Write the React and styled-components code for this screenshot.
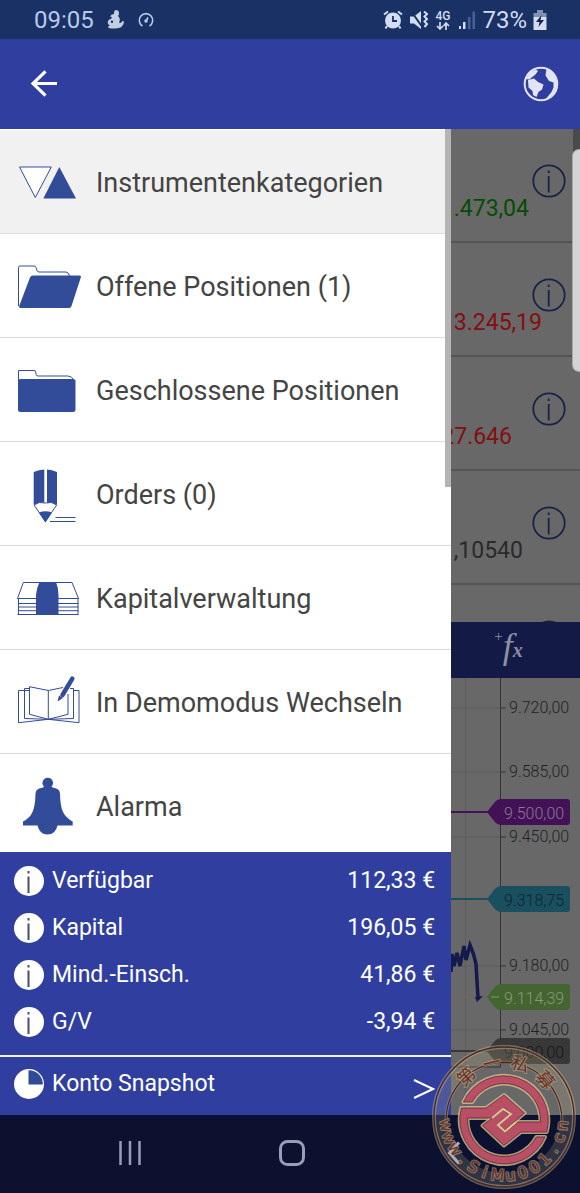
import React from "react";
import styled, { createGlobalStyle } from "styled-components";

const GlobalStyle = createGlobalStyle`
  *, *::before, *::after { box-sizing: border-box; }
  body { margin: 0; background: #0c1130; }
  button { border: 0; padding: 0; background: none; font: inherit; color: inherit; cursor: pointer; }
  ul, dl, dd { margin: 0; padding: 0; list-style: none; }
  svg { display: block; flex: none; }
`;

const INK = "#324c9a";
const BRAND = "#303f9f";

const Shell = styled.div`
  position: relative;
  display: flex;
  flex-direction: column;
  height: 100vh;
  overflow: hidden;
  font-family: Roboto, "Liberation Sans", sans-serif;
`;

const StatusBar = styled.div`
  flex: none;
  display: flex;
  align-items: center;
  justify-content: space-between;
  height: 39px;
  padding: 0 33px 0 34px;
  background: #193165;
  color: #b9c9ea;
  font-size: 24px;
  line-height: 28px;
`;

const StatusGroup = styled.div`
  display: flex;
  align-items: center;
  gap: ${(p) => p.$gap}px;
  color: ${(p) => p.$tone};
`;

const Network = styled.span`
  display: flex;
  flex-direction: column;
  align-items: center;
  font-size: 12px;
  font-weight: 500;
  line-height: 12px;
`;

const AppBar = styled.header`
  flex: none;
  display: flex;
  align-items: center;
  justify-content: space-between;
  height: 90px;
  padding: 0 19px 0 24px;
  background: ${BRAND};
  color: #fff;
`;

const IconButton = styled.button`
  display: grid;
  place-items: center;
  width: 40px;
  height: 40px;
`;

const Body = styled.div`
  flex: 1;
  min-height: 0;
  display: grid;
  grid-template-columns: minmax(0, 7fr) minmax(0, 2fr);
`;

const Drawer = styled.aside`
  position: relative;
  display: flex;
  flex-direction: column;
  min-height: 0;
  background: #fff;
`;

const ScrollThumb = styled.span`
  position: absolute;
  top: 0;
  right: 0;
  width: 6px;
  height: 358px;
  background: #b4b4b4;
`;

const Menu = styled.ul`
  flex: 1;
  min-height: 0;
  padding-top: 1px;
  overflow: hidden;
`;

const MenuItem = styled.li`
  border-bottom: 1px solid #dcdcdc;
  background: ${(p) => (p.$active ? "#f1f1f1" : "#fff")};
`;

const MenuButton = styled.button`
  display: flex;
  align-items: center;
  gap: 14px;
  width: 100%;
  height: 103px;
  padding: 0 17px;
  color: #444;
  font-size: 27px;
  line-height: 32px;
  text-align: left;
  white-space: nowrap;
`;

const MenuLabel = styled.span`
  padding-top: 3px;
`;

const Summary = styled.section`
  flex: none;
  background: ${BRAND};
  color: #fff;
  font-size: 23px;
  line-height: 28px;
`;

const Balances = styled.dl`
  padding: 5px 16px 10px 14px;
  border-bottom: 2px solid #f2f2fa;
`;

const BalanceRow = styled.div`
  display: flex;
  align-items: center;
  justify-content: space-between;
  height: 47px;
`;

const Label = styled.span`
  display: flex;
  align-items: center;
  gap: 8px;
`;

const Snapshot = styled.button`
  display: flex;
  align-items: center;
  justify-content: space-between;
  width: 100%;
  height: 58px;
  padding: 0 16px 5px 14px;
`;

const Backdrop = styled.main`
  display: flex;
  flex-direction: column;
  min-width: 0;
  min-height: 0;
  background: #686868;
`;

const Quotes = styled.ul`
  flex: 1;
  min-height: 0;
  overflow: hidden;
`;

const Quote = styled.li`
  display: flex;
  flex-direction: column;
  align-items: flex-end;
  height: 114px;
  padding-top: 35px;
  border-bottom: 2px solid #545454;
`;

const InfoSlot = styled.button`
  margin-right: 14px;
  line-height: 0;
`;

const Price = styled.span`
  padding-right: ${(p) => p.$end}px;
  color: ${(p) => p.$tone};
  font-size: 23px;
  line-height: 22px;
`;

const Toolbar = styled.div`
  flex: none;
  display: grid;
  place-items: center;
  height: 56px;
  padding-right: 14px;
  background: #131a46;
`;

const FxButton = styled.button`
  display: flex;
  align-items: flex-start;
  color: #8d8fa3;
  font-family: "Liberation Serif", serif;
`;

const FxPart = styled.span`
  font-size: ${(p) => p.$size}px;
  font-style: ${(p) => (p.$italic ? "italic" : "normal")};
  font-weight: ${(p) => (p.$bold ? 700 : 400)};
  line-height: ${(p) => p.$line}px;
`;

const ChartPane = styled.div`
  flex: none;
  display: flex;
  justify-content: flex-end;
  overflow: hidden;
`;

const AxisText = styled.text`
  font-size: 16px;
  font-weight: 300;
  fill: ${(p) => p.$fill};
`;

const NavBar = styled.nav`
  flex: none;
  display: grid;
  grid-template-columns: repeat(3, 1fr);
  place-items: center;
  height: 78px;
  padding: 0 45px 3px 49px;
  background: #0c1130;
`;

const EdgeShade = styled.span`
  position: absolute;
  top: 129px;
  right: 0;
  width: 7px;
  height: 30px;
  background: #4a4a4a;
`;

const EdgeHandle = styled.span`
  position: absolute;
  top: 149px;
  right: 0;
  width: 8px;
  height: 223px;
  border: 1px solid #a9a9a9;
  border-right: 0;
  border-radius: 7px 0 0 7px;
  background: #d4d4d4;
`;

const Stamp = styled.div`
  position: absolute;
  right: 3px;
  bottom: 3px;
`;

const StampText = styled.text`
  font-family: ${(p) => (p.$han ? '"Noto Sans CJK SC", sans-serif' : '"DejaVu Sans", sans-serif')};
  font-size: ${(p) => (p.$han ? 18 : 16)}px;
  fill: #6b302a;
  stroke: #b9a981;
  stroke-opacity: 0.6;
  stroke-width: 2px;
  paint-order: stroke;
  text-anchor: middle;
`;

const icons = {
  categories: (
    <>
      <path d="M2.5 15H34.3L18.3 45.5Z" fill="#fff" stroke={INK} />
      <path d="M42.3 15L59 46.5H26.3Z" fill={INK} />
    </>
  ),
  open: (
    <>
      <path d="M1.5 50V11.5q0-1.5 1.5-1.5H17q1.5 0 2 1.5l1 3q.5 1.5 2 1.5H49q2.500 0 3.500 4" fill="none" stroke={INK} />
      <path d="M16 19.500H62.500q2 0 1.300 2L54.500 50q-.6 2-2.500 2H3.500q-2 0-1.300-2L13 21.500q.8-2 3-2Z" fill={INK} />
    </>
  ),
  closed: (
    <>
      <path d="M1.500 24V10.500H17q1.500 0 1.700 1.500l.4 2.500q.3 1.500 1.900 1.500H51q4 0 6.500 5" fill="none" stroke={INK} />
      <rect x="1" y="19" width="57.500" height="33" rx="2.500" fill={INK} />
    </>
  ),
  orders: (
    <>
      <path d="M16.700 8Q22 5.500 27.300 5.500V42L16.700 40.500ZM30 5.500Q35 5.500 40 8V40.500L30 42Z" fill={INK} />
      <path d="M17 41L28.300 57.500L39.700 41Q35 37 28.300 39Q22 37 17 41Z" fill="#fff" stroke={INK} />
      <path d="M22 48.500Q28.500 46 35 48.500L28.400 58.500Z" fill={INK} />
      <path d="M38.500 53.500H58.500M33 57.500H58.500" stroke={INK} />
    </>
  ),
  capital: (
    <>
      <path d="M6.300 14.500H55L61.500 30.500H.5ZM1.500 30.500V46.500H61V30.500M1 35.500H61.500M1 39H61.500M1 42.700H61.500M.5 46.500H61.500" fill="none" stroke={INK} />
      <path d="M22.500 14H39Q41.500 20 41.500 27V47H19V27Q19.500 20 22.500 14Z" fill={INK} />
    </>
  ),
  demo: (
    <>
      <path d="M12.500 18.500H1.500V50.700L31.300 47.300L62 50.700V18.500H56.500M12.500 16.500H7.500V46.500L31.300 47.300L56.500 46.500V16.500H53M31.300 18.500L12.500 14.700V42.300L31.300 47.300L51 42.300V22M31.300 47.300V18.500L46 15.500" fill="none" stroke={INK} />
      <path d="M55.300 6.700L45.500 23" stroke={INK} strokeWidth="4.500" strokeLinecap="round" />
      <path d="M42 23.500L46 26L40.500 29.500Z" fill={INK} />
    </>
  ),
  alarm: (
    <path d="M30.500 1.700a5.300 5.300 0 0 1 4 9q.5 1 3 1.200Q43 13 43 18q.3 12 3 18 3 6 9.700 9.500V49.500H40.500q-2 9-10 9t-10-9H6V45.500Q13 42 15.500 36q2.700-6 3-18 0-5 5.500-6.100 2.500-.2 3-1.200a5.300 5.300 0 0 1 3.500-9Z" fill={INK} />
  ),
};

const menu = [
  { icon: "categories", label: "Instrumentenkategorien", active: true },
  { icon: "open", label: "Offene Positionen (1)" },
  { icon: "closed", label: "Geschlossene Positionen" },
  { icon: "orders", label: "Orders (0)" },
  { icon: "capital", label: "Kapitalverwaltung" },
  { icon: "demo", label: "In Demomodus Wechseln" },
  { icon: "alarm", label: "Alarma" },
];

const balances = [
  ["Verfügbar", "112,33 €"],
  ["Kapital", "196,05 €"],
  ["Mind.-Einsch.", "41,86 €"],
  ["G/V", "-3,94 €"],
];

const quotes = [
  { price: ".473,04", end: 51, tone: "#054c05" },
  { price: "3.245,19", end: 38, tone: "#820f12" },
  { price: "27.646", end: 68, tone: "#820f12" },
  { price: ",10540", end: 57, tone: "#2a2a2a" },
  { price: "", end: 57, tone: "#2a2a2a" },
];

const ticks = [
  [30, "9.720,00"],
  [94, "9.585,00"],
  [159, "9.450,00"],
  [288, "9.180,00"],
  [352, "9.045,00"],
];

const tags = [
  { y: 134, value: "9.500,00", fill: "#431256", ink: "#8d7795", line: 37 },
  { y: 221, value: "9.318,75", fill: "#1a4f60", ink: "#0f252d", line: 37 },
  { y: 319, value: "9.114,39", fill: "#44652f", ink: "#87997b", line: 0 },
  { y: 373, value: "9.000,00", fill: "#383838", ink: "#161616", line: 40 },
];

function InfoBadge() {
  return (
    <svg width="30" height="30" viewBox="0 0 30 30" aria-hidden="true">
      <circle cx="15" cy="15" r="15" fill="#fff" />
      <path d="M14.500 5V7.500M14.500 10.500V27" stroke="#4a4a72" strokeWidth="2" />
    </svg>
  );
}

function InfoRing() {
  return (
    <svg width="34" height="34" viewBox="0 0 34 34" aria-hidden="true">
      <circle cx="17" cy="17" r="15.700" fill="none" stroke="#182247" strokeWidth="1.800" />
      <path d="M16.700 6.500V9M16.700 12V28.500" stroke="#182247" strokeWidth="1.800" />
    </svg>
  );
}

function Chart() {
  return (
    <svg width="129" height="437" viewBox="0 0 129 437" role="img" aria-label="Kursverlauf">
      <g stroke="#5c5c5c">
        <path d="M14.500 0V437" />
        {ticks.map(([y]) => (
          <path key={y} d={`M0 ${y}H50`} />
        ))}
      </g>
      <path d="M49.500 0V389M0 389H50" stroke="#333" fill="none" />
      {ticks.map(([y, value]) => (
        <g key={value}>
          <path d={`M49 ${y}H55`} stroke="#333" />
          <AxisText x="58" y={y + 5} $fill="#222">{value}</AxisText>
        </g>
      ))}
      <path d="M0 319H37" stroke="#706560" />
      {tags.map((t) => (
        <g key={t.value}>
          {t.line > 0 && <path d={`M0 ${t.y}H${t.line}`} stroke={t.fill} strokeWidth="2" />}
          <path
            d={`M36 ${t.y}L43 ${t.y - 9}Q46 ${t.y - 13} 51 ${t.y - 13}H116q3 0 3 3V${t.y + 10}q0 3-3 3H51Q46 ${t.y + 13} 43 ${t.y + 9}Z`}
            fill={t.fill}
          />
          <AxisText x="53" y={t.y + 7} $fill={t.ink}>{t.value}</AxisText>
        </g>
      ))}
      <path d="M40 319H48" stroke="#7f9472" />
      <path
        d="M0 294L1 276L3 288L6 275L9 288L13 268L15 282L19 267Q23 276 25 286L27 320"
        fill="none"
        stroke="#141a4c"
        strokeWidth="3.500"
      />
      <path d="M24 319L32 318L26 324Z" fill="#141a4c" />
    </svg>
  );
}

const UPPER_HOOK =
  "M-40.600 -15A44.400 44.400 0 0 1 42.700 15H17L0 28.500L-21.500 8.500L-1 -7L5 -2.500L-7 8L1 15.500L14 5H36.450A36.500 36.500 0 0 0 -31.750 -15Z";
const LOWER_HOOK =
  "M-42.700 -9H-18L0 -22L20.500 -4L1 13L-5 8L7.500 -3L0 -9.500L-13 1H-36.450A36.500 36.500 0 0 0 32.300 20H41A44.400 44.400 0 0 1 -42.700 -9Z";

function StampArt() {
  const han = [["第", -43], ["一", -13], ["私", 17], ["募", 48]];
  const latin = [..."www.SiMu001.cn"];
  return (
    <svg width="146" height="146" viewBox="-73 -73 146 146" role="img" aria-label="第一私募">
      <circle r="63" fill="none" stroke="#b9ad86" strokeOpacity=".22" strokeWidth="14" />
      <circle r="70" fill="none" stroke="#c5b88d" strokeOpacity=".45" strokeWidth="4" />
      <circle r="70" fill="none" stroke="#4e2422" strokeWidth="1.300" />
      <path d="M-57 14A58 58 0 1 1 57 14" fill="none" stroke="#c5b88d" strokeOpacity=".4" strokeWidth="3" />
      <path d="M-57 14A58 58 0 1 1 57 14" fill="none" stroke="#4e2422" strokeWidth="1.200" />
      {han.map(([c, a]) => (
        <StampText key={c} $han y="-49" transform={`rotate(${a})`}>{c}</StampText>
      ))}
      {latin.map((c, i) => (
        <StampText key={i} y="64" transform={`rotate(${82 - i * 12.6})`}>{c}</StampText>
      ))}
      <g fill="none" stroke="#cfc08f" strokeOpacity=".8" strokeWidth="4" strokeLinejoin="round">
        <path d={UPPER_HOOK} />
        <path d={LOWER_HOOK} />
      </g>
      <g fill="#b84f64" stroke="#6d2434" strokeWidth=".8">
        <path d={UPPER_HOOK} />
        <path d={LOWER_HOOK} />
      </g>
      <path d="M-12 1L-1 -8L7 -3L-6 8L1 14.500L12 5" fill="none" stroke="#d6c795" strokeWidth="2" />
    </svg>
  );
}

export default function App() {
  return (
    <>
      <GlobalStyle />
      <Shell>
        <StatusBar>
          <StatusGroup $gap={13} $tone="#b9c9ea">
            <span>09:05</span>
            <svg width="18" height="19" viewBox="0 0 18 19" fill="#c3cde0" aria-hidden="true">
              <path d="M9 0q3 .3 3 3.500 0 1.500-1 2.500 3 2.500 1 7 3 0 3-2l2 .500q0 6.500-9 7Q1 19 1 16.500l2-1Q0 14 1 11q1-2 3-2l1-2-2-.500Q4 4 7 4q-.3-3.500 2-4Z" />
              <circle cx="5" cy="11.800" r="1.200" fill="#193165" />
            </svg>
            <svg width="16" height="16" viewBox="0 0 16 16" fill="none" stroke="#b9c9ea" strokeWidth="1.600" aria-hidden="true">
              <path d="M4.500 14A6.700 6.700 0 1 1 11.500 14M8 9L10 5.500" />
              <circle cx="8" cy="9" r="1" fill="#b9c9ea" />
            </svg>
          </StatusGroup>
          <StatusGroup $gap={6} $tone="#d3dcf0">
            <svg width="20" height="20" viewBox="0 0 20 20" aria-hidden="true">
              <circle cx="10" cy="10.500" r="8" fill="#d3dcf0" />
              <path d="M1 4.500L5 1.500M19 4.500L15 1.500M4 16L2.500 18.500M16 16L17.500 18.500" stroke="#d3dcf0" strokeWidth="2" />
              <path d="M10 6V11H14" stroke="#193165" strokeWidth="1.800" fill="none" />
            </svg>
            <svg width="20" height="20" viewBox="0 0 20 20" aria-hidden="true">
              <path d="M1 6.500H5L12 1V19L5 13.500H1Z" fill="#d3dcf0" />
              <path d="M2 1L14 18" stroke="#193165" strokeWidth="2" />
              <path d="M15 1.500L18 4L15.500 6.500L18 9L15.500 11.500L18 14L15.500 17" stroke="#d3dcf0" strokeWidth="2" fill="none" />
            </svg>
            <Network>
              4G
              <svg width="14" height="8" viewBox="0 0 14 8" fill="none" stroke="#d3dcf0" strokeWidth="1.700" aria-hidden="true">
                <path d="M4 0V7M1 4L4 7L7 4M10 8V1M7.500 4L10 1L13 4" />
              </svg>
            </Network>
            <svg width="20" height="20" viewBox="0 0 20 20" fill="#d3dcf0" aria-hidden="true">
              <path d="M3 16H5V19H3ZM7 12H9.500V19H7Z" />
              <path d="M12 7H14.500V19H12ZM16.500 1.500H19V19H16.500Z" fill="#4a608f" />
            </svg>
            <span>73%</span>
            <svg width="14" height="20" viewBox="0 0 14 20" aria-hidden="true">
              <path d="M4 0H10V3H13.500V7H.5V3H4Z" fill="#8291b2" />
              <path d="M.5 7H13.500V20H.5Z" fill="#d3dcf0" />
              <path d="M8.500 5L3 12H6.500L5.500 17L11 10H7.500Z" fill="#16264a" />
            </svg>
          </StatusGroup>
        </StatusBar>

        <AppBar>
          <IconButton aria-label="Zurück">
            <svg width="28" height="28" viewBox="0 0 28 28" fill="none" stroke="#fff" strokeWidth="3.200" aria-hidden="true">
              <path d="M27 13.500H3M15.500 1.300L3 13.500L15.500 25.700" />
            </svg>
          </IconButton>
          <IconButton aria-label="Sprache">
            <svg width="36" height="36" viewBox="0 0 36 36" fill="#e1e4f6" aria-hidden="true">
              <circle cx="18" cy="18" r="16.300" fill="none" stroke="#e1e4f6" strokeWidth="2" />
              <path d="M3 13Q6 5 13 3.500L15 5L12.500 8.500L8 12L6.500 13.500Z" />
              <path d="M5 14L11 12.500L15 16L20.500 18.500L19 23.500L15.500 26L13.500 31L10 29L9.500 25L5.500 21.500Z" />
              <path d="M23.500 2.500Q32 5 34 15Q35 23 29 30Q26 33 22 34L26 29L28.500 26L30.500 21.500V16.500L26 15L22.500 9.500Z" />
            </svg>
          </IconButton>
        </AppBar>

        <Body>
          <Drawer>
            <Menu>
              {menu.map((m) => (
                <MenuItem key={m.label} $active={m.active}>
                  <MenuButton>
                    <svg width="65" height="60" viewBox="0 0 65 60" aria-hidden="true">
                      {icons[m.icon]}
                    </svg>
                    <MenuLabel>{m.label}</MenuLabel>
                  </MenuButton>
                </MenuItem>
              ))}
            </Menu>
            <ScrollThumb />
            <Summary>
              <Balances>
                {balances.map(([label, value]) => (
                  <BalanceRow key={label}>
                    <dt>
                      <Label>
                        <InfoBadge />
                        {label}
                      </Label>
                    </dt>
                    <dd>{value}</dd>
                  </BalanceRow>
                ))}
              </Balances>
              <Snapshot>
                <Label>
                  <svg width="30" height="30" viewBox="0 0 30 30" aria-hidden="true">
                    <circle cx="15" cy="15" r="15" fill="#fff" />
                    <path d="M14.500 1.200A13.800 13.800 0 0 1 28.800 15.500H14.500Z" fill="#2f4b95" />
                  </svg>
                  Konto Snapshot
                </Label>
                <svg width="22" height="30" viewBox="0 0 22 30" fill="none" stroke="#fff" strokeWidth="2" aria-hidden="true">
                  <path d="M1 11L20 20L1 29" />
                </svg>
              </Snapshot>
            </Summary>
          </Drawer>

          <Backdrop>
            <Quotes>
              {quotes.map((q, i) => (
                <Quote key={i}>
                  <InfoSlot aria-label="Info">
                    <InfoRing />
                  </InfoSlot>
                  <Price $end={q.end} $tone={q.tone}>{q.price}</Price>
                </Quote>
              ))}
            </Quotes>
            <Toolbar>
              <FxButton aria-label="Indikator hinzufügen">
                <FxPart $size={15} $line={16}>+</FxPart>
                <FxPart $size={36} $line={36} $italic>f</FxPart>
                <FxPart $size={20} $line={44} $italic $bold>x</FxPart>
              </FxButton>
            </Toolbar>
            <ChartPane>
              <Chart />
            </ChartPane>
          </Backdrop>
        </Body>

        <NavBar>
          <IconButton aria-label="Letzte Apps">
            <svg width="24" height="26" viewBox="0 0 24 26" stroke="#9a9db4" strokeWidth="2.500" aria-hidden="true">
              <path d="M2.500 1V25M12 1V25M21.500 1V25" />
            </svg>
          </IconButton>
          <IconButton aria-label="Startseite">
            <svg width="26" height="26" viewBox="0 0 26 26" fill="none" stroke="#9a9db4" strokeWidth="3" aria-hidden="true">
              <rect x="1.500" y="1.500" width="23" height="23" rx="7" />
            </svg>
          </IconButton>
          <IconButton aria-label="Zurück">
            <svg width="14" height="24" viewBox="0 0 14 24" fill="none" stroke="#a9acc4" strokeWidth="3" aria-hidden="true">
              <path d="M12 1.500L2.500 12L12 22.500" />
            </svg>
          </IconButton>
        </NavBar>

        <EdgeShade />
        <EdgeHandle />
        <Stamp>
          <StampArt />
        </Stamp>
      </Shell>
    </>
  );
}
